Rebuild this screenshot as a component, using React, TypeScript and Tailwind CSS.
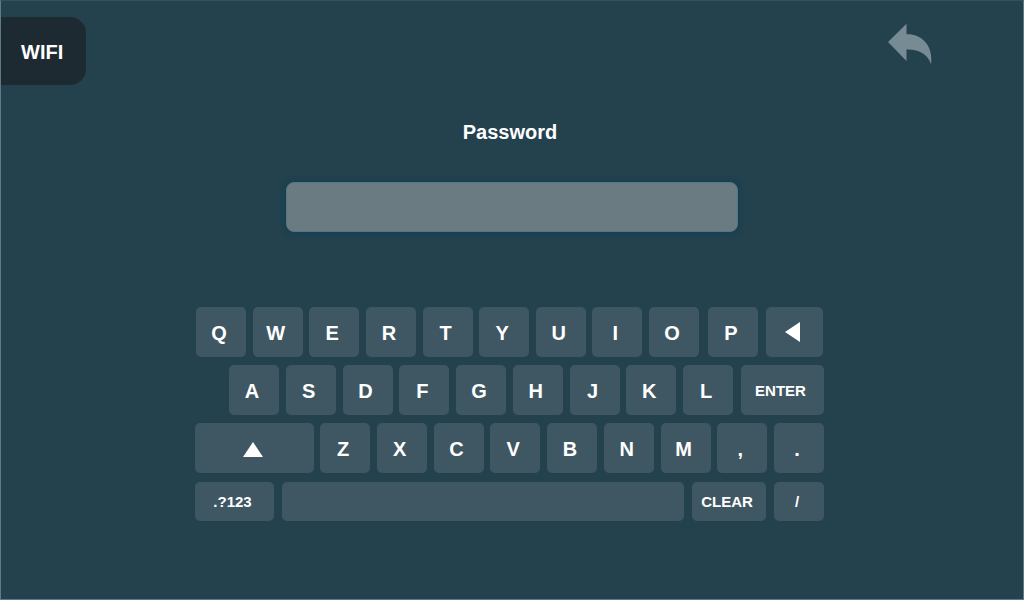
import { useState, type ReactNode } from "react";

const TOP_ROW = ["Q", "W", "E", "R", "T", "Y", "U", "I", "O"];
const HOME_ROW = ["A", "S", "D", "F", "G", "H", "J", "K", "L"];
const BOTTOM_ROW = ["Z", "X", "C", "V", "B", "N", "M", ",", "."];

type KeyProps = {
  children?: ReactNode;
  className?: string;
  label?: string;
  onPress: () => void;
};

function Key({ children, className = "w-[50px] text-xl", label, onPress }: KeyProps) {
  return (
    <button
      type="button"
      aria-label={label}
      onClick={onPress}
      className={`flex items-center justify-center rounded-[5px] bg-[#3f5763] pt-0.5 pr-1 font-bold text-white active:bg-[#54707d] ${className}`}
    >
      {children}
    </button>
  );
}

function KeyGroup({ keys, onType }: { keys: string[]; onType: (key: string) => void }) {
  return (
    <div className="flex grow justify-between">
      {keys.map((key) => (
        <Key key={key} onPress={() => onType(key)}>
          {key}
        </Key>
      ))}
    </div>
  );
}

export default function App() {
  const [password, setPassword] = useState("");
  const [shifted, setShifted] = useState(true);

  const type = (key: string) =>
    setPassword((value) => value + (shifted ? key : key.toLowerCase()));

  return (
    <main className="flex min-h-screen flex-col border border-[#607b87] border-t-[#315361] bg-[#24414e] pt-4 font-['Liberation_Sans',Arial,sans-serif] text-white">
      <header className="flex items-start justify-between pr-[91px]">
        <h1 className="flex h-[68px] items-center rounded-r-2xl bg-[#1e2a32] pt-0.5 pr-[23px] pl-5 text-xl font-bold">
          WIFI
        </h1>
        <button type="button" aria-label="Back" className="mt-1.5 text-[#778b94]">
          <svg width="44" height="42" viewBox="0 0 44 42" fill="currentColor" aria-hidden="true">
            <path d="M0 19 18.500 .7V11.300C33 10.500 45.500 22 43 41.200 40 31.500 31.500 26 18.500 26.400V38Z" />
          </svg>
        </button>
      </header>

      <form
        className="flex flex-col items-center pt-[35px]"
        onSubmit={(event) => event.preventDefault()}
      >
        <label htmlFor="password" className="pr-1 text-xl leading-6 font-bold">
          Password
        </label>
        <input
          id="password"
          type="password"
          value={password}
          onChange={(event) => setPassword(event.target.value)}
          className="mt-[38px] h-[50px] w-full max-w-[452px] rounded-lg border border-[#5b7580] bg-[#6a7b81] px-4 text-xl text-white shadow-[0_0_4px_2px_#134254] outline-none"
        />
      </form>

      <section aria-label="Keyboard" className="mt-[75px] flex justify-center pr-[5px]">
        <div className="flex w-full max-w-[629px] flex-col gap-2">
          <div className="flex h-[50px] px-px">
            <KeyGroup keys={TOP_ROW} onType={type} />
            <Key className="ml-[9px] w-[50px] text-xl" onPress={() => type("P")}>
              P
            </Key>
            <Key
              label="Backspace"
              className="ml-2 w-[57px]"
              onPress={() => setPassword((value) => value.slice(0, -1))}
            >
              <svg width="15" height="22" viewBox="0 0 15 22" fill="currentColor" aria-hidden="true">
                <path d="M0 10 15 0V20Z" />
              </svg>
            </Key>
          </div>

          <div className="flex h-[50px] gap-2 pl-[34px]">
            <KeyGroup keys={HOME_ROW} onType={type} />
            <Key className="w-[83px] text-[15px]" onPress={() => undefined}>
              ENTER
            </Key>
          </div>

          <div className="flex h-[50px] gap-1.5">
            <Key
              label="Shift"
              className="w-[119px]"
              onPress={() => setShifted((value) => !value)}
            >
              <svg width="20" height="15" viewBox="0 0 20 15" fill="currentColor" aria-hidden="true">
                <path d="M10 0 20 15H0Z" />
              </svg>
            </Key>
            <KeyGroup keys={BOTTOM_ROW} onType={type} />
          </div>

          <div className="mt-px flex h-[39px] gap-2">
            <Key className="w-[79px] text-[15px]" onPress={() => undefined}>
              .?123
            </Key>
            <Key label="Space" className="grow" onPress={() => type(" ")} />
            <Key className="w-[74px] text-[15px]" onPress={() => setPassword("")}>
              CLEAR
            </Key>
            <Key className="w-[50px] text-[15px]" onPress={() => type("/")}>
              /
            </Key>
          </div>
        </div>
      </section>
    </main>
  );
}
